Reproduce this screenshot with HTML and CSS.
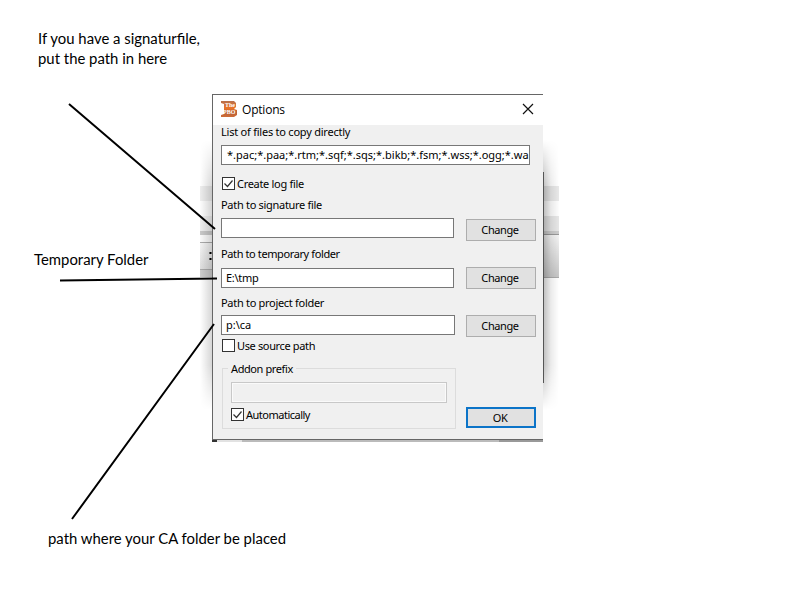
FILE: index.html
```
<!DOCTYPE html>
<html lang="en">
<head>
<meta charset="utf-8">
<title>Options</title>
<link rel="stylesheet" href="styles.css">
</head>
<body>
<main class="canvas">
  <div class="backdrop backdrop-left"><span class="dots">:</span></div>
  <div class="backdrop backdrop-right"></div>

  <section class="dialog">
    <header class="titlebar">
      <svg class="logo" width="17" height="18" viewBox="0 0 17 18">
        <defs><linearGradient id="g" x1="0" y1="0" x2="0" y2="1"><stop offset="0" stop-color="#b8704c"/><stop offset=".45" stop-color="#ec7427"/><stop offset=".7" stop-color="#b86038"/><stop offset="1" stop-color="#cf6c35"/></linearGradient></defs>
        <path d="M0 1h13l2 2v4l-2 2 3 1v5l-3 2H0v-2l3-1V4L0 3z" fill="url(#g)"/>
        <text x="4" y="7" class="logo-text">The</text>
        <text x="2" y="14" class="logo-text">PBO</text>
      </svg>
      <h1>Options</h1>
      <svg class="close" width="12" height="12" viewBox="0 0 12 12"><path d="M1 1l10 10M11 1L1 11" stroke="#111" stroke-width="1.2" fill="none"/></svg>
    </header>
    <div class="body">
      <div class="label l-files"><span>List of files to copy directly</span></div>
      <div class="input wide"><span>*.pac;*.paa;*.rtm;*.sqf;*.sqs;*.bikb;*.fsm;*.wss;*.ogg;*.wa</span></div>
      <div class="columns">
        <div class="fields">
          <div class="check c-log"><svg class="box" viewBox="0 0 13 13"><rect x=".5" y=".5" width="12" height="12"/><path d="M2.5 6.5l3 3 5-6"/></svg><span>Create log file</span></div>
          <div class="label l-sig"><span>Path to signature file</span></div>
          <div class="input"></div>
          <div class="label l-tmp"><span>Path to temporary folder</span></div>
          <div class="input"><span>E:\tmp</span></div>
          <div class="label l-proj"><span>Path to project folder</span></div>
          <div class="input project"><span>p:\ca</span></div>
          <div class="check c-src"><svg class="box" viewBox="0 0 13 13"><rect x=".5" y=".5" width="12" height="12"/></svg><span>Use source path</span></div>
          <div class="group">
            <div class="legend"><span>Addon prefix</span></div>
            <div class="input disabled"></div>
            <div class="check c-auto"><svg class="box" viewBox="0 0 13 13"><rect x=".5" y=".5" width="12" height="12"/><path d="M2.5 6.5l3 3 5-6"/></svg><span>Automatically</span></div>
          </div>
        </div>
        <div class="buttons">
          <div class="button"><span>Change</span></div>
          <div class="button"><span>Change</span></div>
          <div class="button"><span>Change</span></div>
          <div class="button ok"><span>OK</span></div>
        </div>
      </div>
    </div>
  </section>
  <div class="right-edge"></div>
  <div class="bottom-strip"></div>

  <svg class="lines" width="800" height="600" viewBox="0 0 800 600">
    <path d="M69 104L215 229M60 280.5L217 278.5M72 519L214 324"/>
  </svg>
  <p class="note n-sig">If you have a signaturfile,<br>put the path in here</p>
  <p class="note n-tmp">Temporary Folder</p>
  <p class="note n-ca">path where your CA folder be placed</p>
</main>
</body>
</html>
```
FILE: styles.css
```
* { box-sizing: border-box; }
body { margin: 0; background: #fff; }
.canvas { position: relative; width: 800px; height: 600px; overflow: hidden; background: #fff; }

.backdrop {
  position: absolute; top: 140px; height: 270px;
  -webkit-mask-image: linear-gradient(transparent, #000 46px, #000 225px, transparent);
  mask-image: linear-gradient(transparent, #000 46px, #000 225px, transparent);
}
.backdrop-left {
  left: 200px; width: 12px;
  background:
    linear-gradient(to left, rgba(0,0,0,.16), transparent),
    linear-gradient(#fff 46px, #ededed 46px 61px, #fdfdfd 61px 76px, #eee 76px 91px, #c8c8c8 91px 95px, #fafafa 95px 102px, #aaa 102px 103px, #f4f4f4 103px, #dedede 129px, #aaa 129px 130px, #ccc 130px 137px, #fff 137px);
}
.backdrop-right {
  left: 543px; width: 16px;
  background:
    linear-gradient(to right, rgba(0,0,0,.26), rgba(0,0,0,.08) 50%, transparent),
    linear-gradient(#fff 46px, #e8e8e8 46px 61px, #fdfdfd 61px 76px, #e6e6e6 76px 91px, #ccc 91px 94px, #999 94px 95px, #f3f3f3 95px, #c6c6c6 137px, #aaa 137px 138px, #fff 138px);
}
.dots { position: absolute; left: 8px; top: 105px; font: bold 15px/20px "Liberation Sans", sans-serif; }

.dialog {
  position: absolute; left: 212px; top: 94px; width: 331px; height: 346px;
  border: 1px solid #666; border-right: 0; background: #f0f0f0;
  font: 11px/14px "Noto Sans", sans-serif; letter-spacing: -.3px; color: #000;
}
.dialog span { white-space: pre; }
.titlebar { display: flex; align-items: center; height: 30px; padding: 0 9px 0 8px; background: #fff; }
.logo { margin-top: -2px; letter-spacing: 0; }
.logo-text { font: bold 6px "Liberation Serif", serif; fill: #fff; }
h1 { margin: 0 auto 0 4px; font: 12px/16px "Open Sans", sans-serif; letter-spacing: -.2px; }
.close { margin-top: -2px; }
.body { padding: 0 7px 0 8px; }
.label { height: 14px; }
.l-files { margin-bottom: 6px; letter-spacing: -.23px; }
.input { height: 20px; width: 233px; padding: 1px 4px; border: 1px solid #777; background: #fff; line-height: 16px; overflow: hidden; }
.wide { width: 309px; padding-left: 5px; letter-spacing: 0; }
.columns { display: flex; justify-content: space-between; }
.fields { width: 235px; }
.check { display: flex; align-items: center; height: 13px; margin-left: 1px; gap: 2px; }
.box { width: 13px; height: 13px; flex: none; }
.box rect { fill: #fff; stroke: #333; }
.box path { fill: none; stroke: #333; stroke-width: 1.2; }
.c-log { margin-top: 12px; }
.l-sig { margin: 8px 0 6px; }
.l-tmp { margin: 9px 0 7px; letter-spacing: -.39px; }
.l-proj { margin: 8px 0 5px; }
.project { width: 234px; letter-spacing: 0; }
.c-src { margin-top: 4px; letter-spacing: -.36px; }
.group { position: relative; width: 234px; height: 61px; margin: 16px 0 0 1px; padding: 13px 8px 0; border: 1px solid #dcdcdc; }
.legend { position: absolute; left: 5px; top: -7px; height: 14px; padding: 0 3px; background: #f0f0f0; letter-spacing: -.4px; }
.disabled { width: 216px; height: 21px; border-color: #c8c8c8; background: #f0f0f0; box-shadow: inset 0 0 0 1px #fafafa; }
.c-auto { margin: 5px 0 0; letter-spacing: -.5px; }
.buttons { padding-top: 54px; }
.button { width: 70px; height: 22px; margin-bottom: 26px; padding-right: 2px; border: 1px solid #adadad; background: #e1e1e1; text-align: center; line-height: 20px; letter-spacing: -.4px; }
.button:nth-child(3) { margin-bottom: 70px; }
.ok { height: 21px; border: 2px solid #0c74c8; line-height: 18px; }

.right-edge { position: absolute; left: 543px; top: 172px; width: 1px; height: 211px; background: #555; }
.bottom-strip { position: absolute; left: 212px; top: 440px; width: 331px; height: 2px; background: linear-gradient(to right, #333 5px, #e2e2e2 5px 30px, #bbb 30px 287px, #999 287px); }
.lines { position: absolute; left: 0; top: 0; }
.lines path { fill: none; stroke: #000; stroke-width: 2; }
.note { position: absolute; margin: 0; white-space: nowrap; font: 14.9px/20px Lato, "Noto Sans", sans-serif; color: #000; }
.n-sig { left: 38px; top: 28px; }
.n-tmp { left: 34px; top: 249px; }
.n-ca { left: 48px; top: 528px; }
```
